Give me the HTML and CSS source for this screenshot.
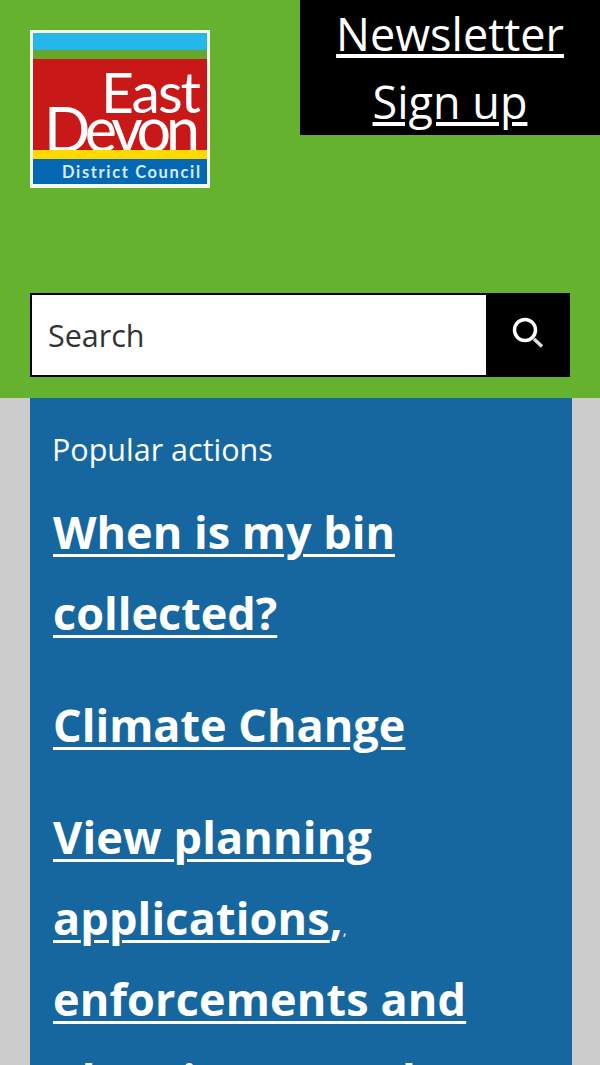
FILE: index.html
```html
<!DOCTYPE html>
<html lang="en">
<head>
<meta charset="utf-8">
<title>East Devon District Council</title>
<link rel="stylesheet" href="styles.css">
</head>
<body>
<header class="header">
  <div class="top">
    <a class="logo" href="#">
      <svg viewBox="0 0 180 158" width="180" height="158">
        <rect width="180" height="158" fill="#f4f9f4"/>
        <rect x="3" y="3" width="174" height="17" fill="#25b6ea"/>
        <rect x="3" y="20" width="174" height="9" fill="#65a82e"/>
        <rect x="3" y="29" width="174" height="91" fill="#c91818"/>
        <text class="logo-big" x="171" y="83" text-anchor="end" textLength="100" lengthAdjust="spacing">East</text>
        <text class="logo-big logo-devon" x="170" y="122" text-anchor="end" textLength="156" lengthAdjust="spacing">Devon</text>
        <rect x="3" y="120" width="174" height="9" fill="#ffd800"/>
        <rect x="3" y="129" width="174" height="25" fill="#0468b4"/>
        <text class="logo-small" x="170" y="148" text-anchor="end" textLength="138" lengthAdjust="spacing">District Council</text>
      </svg>
    </a>
    <a class="newsletter" href="#">Newsletter Sign up</a>
  </div>
  <form class="search">
    <div class="search-input">Search</div>
    <div class="search-btn">
      <svg viewBox="0 0 36 36" width="36" height="36" fill="none" stroke="#fff">
        <circle cx="15" cy="13" r="10.5" stroke-width="3.5"/>
        <path d="M24 22l8 7.5" stroke="#ddd" stroke-width="3.5"/>
      </svg>
    </div>
  </form>
</header>
<main class="wrap">
  <section class="panel">
    <h2 class="panel-title">Popular actions</h2>
    <ul class="actions">
      <li><a href="#">When is my bin collected?</a></li>
      <li><a href="#">Climate Change</a></li>
      <li class="actions-long"><a href="#">View planning applications</a>,<span class="tiny-comma">,</span> <a href="#">enforcements and planning appeals</a></li>
    </ul>
  </section>
</main>
</body>
</html>
```
FILE: styles.css
```css
* { box-sizing: border-box; }
html, body { margin: 0; padding: 0; }
body {
  background: #ccc;
  font-family: "Open Sans", sans-serif;
  color: #fff;
  height: 1065px;
  overflow: hidden;
}
a { color: #fff; }
.header {
  background: #65b22e;
  height: 398px;
  padding-left: 30px;
  padding-right: 30px;
  display: flex;
  flex-direction: column;
}
.top {
  display: flex;
  justify-content: space-between;
  align-items: flex-start;
  height: 293px;
}
.logo { display: block; margin-top: 30px; height: 158px; }
.logo svg { display: block; }
.logo-big { font-family: "Lato", sans-serif; font-size: 57px; fill: #fff; }
.logo-devon { font-size: 61px; }
.logo-small { font-family: "Lato", sans-serif; font-size: 16.5px; font-weight: 700; fill: #d7ecf8; }
.newsletter {
  display: block;
  width: 300px;
  margin-right: -30px;
  height: 135px;
  background: #000;
  font-size: 45px;
  line-height: 68px;
  text-align: center;
  padding: 0 30px;
}
.search { display: flex; height: 84px; }
.search-input {
  flex: 1;
  background: #fff;
  border: 2px solid #000;
  border-right: 0;
  color: #333;
  font-size: 30.5px;
  line-height: 80px;
  padding-left: 16px;
}
.search-btn {
  width: 84px;
  background: #000;
  display: flex;
  align-items: center;
  justify-content: center;
}
.wrap { padding: 0 28px 0 30px; }
.panel { background: #16679f; padding: 31px 24px 0 23px; height: 667px; }
.panel-title { margin: 0 0 0 -1px; font-weight: 400; font-size: 30.5px; line-height: 40px; }
.actions {
  list-style: none;
  margin: 22px 0 0;
  padding: 0;
  font-size: 45px;
  line-height: 81px;
  font-weight: 700;
  font-kerning: none;
}
.actions a { text-decoration-thickness: 3px; text-underline-offset: 5px; }
.actions li { margin-bottom: 31px; }
.actions .actions-long { letter-spacing: 0.15px; }
.tiny-comma { font-size: 15px; font-weight: 400; line-height: 0; }
```
